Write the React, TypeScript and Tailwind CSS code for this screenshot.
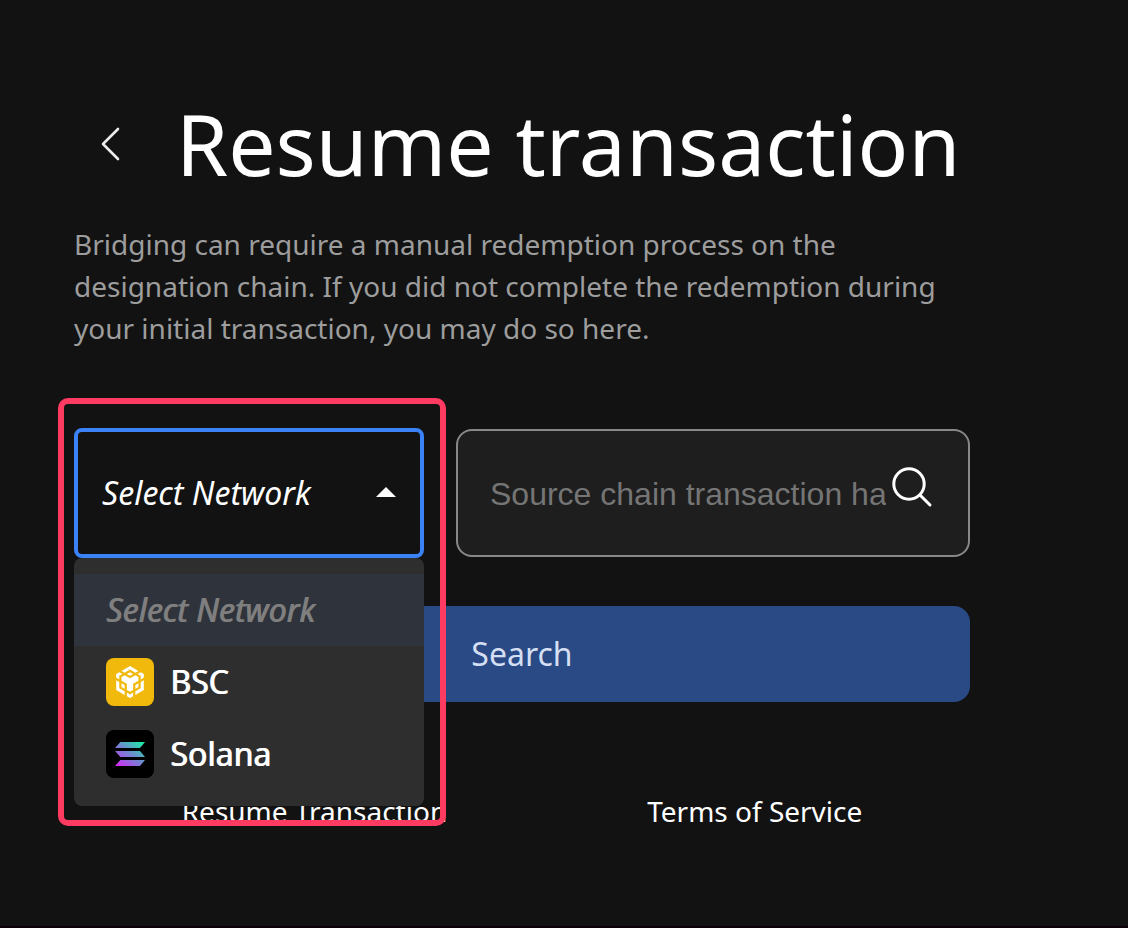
import { useState } from "react";
import type { ReactNode } from "react";

function BscIcon() {
  return (
    <span className="flex size-12 shrink-0 items-center justify-center rounded-lg bg-[#f0b90b]">
      <svg viewBox="0 0 24 24" className="size-8" fill="#fff" aria-hidden="true">
        <path d="M5.631 3.676 12.001 0l6.367 3.676-2.34 1.358L12 2.716 7.972 5.034l-2.34-1.358Zm12.737 4.636-2.34-1.358L12 9.272 7.972 6.954l-2.34 1.358v2.716l4.026 2.318v4.636L12 19.341l2.341-1.359v-4.636l4.027-2.318V8.312Zm0 7.352v-2.716l-2.34 1.358v2.716l2.34-1.358Zm1.663.96-4.027 2.318v2.717l6.368-3.677V10.63l-2.34 1.358v4.636Zm-2.34-10.63 2.34 1.358v2.716l2.341-1.358V5.994l-2.34-1.358-2.342 1.358ZM9.657 19.926v2.716L12 24l2.341-1.358v-2.716l-2.34 1.358-2.342-1.358Zm-4.027-4.262 2.34 1.358v-2.716l-2.34-1.358v2.716Zm4.027-9.67L12 7.352l2.341-1.358L12 4.636 9.659 5.994Zm-5.69 1.358 2.34-1.358-2.34-1.358-2.342 1.358V8.71l2.341 1.358V7.352Zm0 4.636-2.341-1.358v7.352l6.369 3.676v-2.716l-4.028-2.318v-4.636Z" />
      </svg>
    </span>
  );
}

function SolanaIcon() {
  return (
    <span className="flex size-12 shrink-0 rounded-lg bg-black">
      <svg viewBox="0 0 144 144" className="size-12" aria-hidden="true">
        <defs>
          <linearGradient id="solana" gradientUnits="userSpaceOnUse" x1="40" y1="112" x2="102" y2="32">
            <stop offset="0" stopColor="#d32df5" />
            <stop offset="0.5" stopColor="#7384d2" />
            <stop offset="1" stopColor="#1ceaa6" />
          </linearGradient>
        </defs>
        <path fill="url(#solana)" d="M43 36H117L102 54H27ZM27 63H102L117 81H43ZM43 90H117L102 108H27Z" />
      </svg>
    </span>
  );
}

const networks: { name: string; icon: ReactNode }[] = [
  { name: "BSC", icon: <BscIcon /> },
  { name: "Solana", icon: <SolanaIcon /> },
];

export default function App() {
  const [open, setOpen] = useState(true);
  const [network, setNetwork] = useState("");
  const choose = (name: string) => {
    setNetwork(name);
    setOpen(false);
  };

  return (
    <div className="min-h-screen border-b-2 border-[#0b0008] bg-[#121212] pt-24 pr-[158px] pl-[74px] font-['Noto_Sans',sans-serif] text-white">
      <header className="flex h-24 items-center">
        <button type="button" aria-label="Back" className="flex w-[102px] shrink-0 pl-6">
          <svg viewBox="0 0 24 36" className="h-9 w-6" fill="none" stroke="#ececec" strokeWidth="2.6" strokeLinecap="round" strokeLinejoin="round" aria-hidden="true">
            <path d="M20 3 5 18l15 15" />
          </svg>
        </button>
        <h1 className="text-[84px] leading-24 whitespace-nowrap">Resume transaction</h1>
      </header>

      <p className="mt-[31px] text-[28px] leading-[42px] text-[#9d9d9d]">
        Bridging can require a manual redemption process on the designation chain. If you did not complete the
        redemption during your initial transaction, you may do so here.
      </p>

      <form onSubmit={(e) => e.preventDefault()}>
        <div className="mt-[79px] flex gap-8">
          <div className="relative w-[350px] shrink-0">
            <select
              aria-label="Network"
              value={network}
              onChange={(e) => setNetwork(e.target.value)}
              onMouseDown={(e) => {
                e.preventDefault();
                setOpen(!open);
              }}
              className="block h-[130px] w-full appearance-none rounded-lg border-4 border-[#3b82f6] bg-transparent px-6 text-[32px] italic outline-none"
            >
              <option value="">Select Network</option>
              {networks.map((n) => (
                <option key={n.name}>{n.name}</option>
              ))}
            </select>
            <svg viewBox="0 0 20 10" className="pointer-events-none absolute top-[59px] right-7 h-2.5 w-5" fill="#fff" aria-hidden="true">
              <path d="M10 0 20 10H0Z" />
            </svg>
            {open && (
              <>
                <ul className="absolute top-full left-0 z-10 w-full rounded-lg bg-[#2e2e2e] py-4 text-[32px]">
                  <li>
                    <button type="button" onClick={() => choose("")} className="flex h-[72px] w-full items-center bg-[#2f333b] px-8 text-[#7f7f7f] italic [text-shadow:1px_0_currentColor]">
                      Select Network
                    </button>
                  </li>
                  {networks.map((n) => (
                    <li key={n.name}>
                      <button type="button" onClick={() => choose(n.name)} className="flex h-[72px] w-full items-center gap-4 px-8 [text-shadow:1px_0_currentColor]">
                        {n.icon}
                        {n.name}
                      </button>
                    </li>
                  ))}
                </ul>
                <div className="pointer-events-none absolute -top-[30px] -left-4 z-20 h-[428px] w-[388px] rounded-[10px] border-6 border-[#ff3b61]" />
              </>
            )}
          </div>

          <div className="my-px flex min-w-0 flex-1 items-center rounded-2xl border-2 border-[#888] bg-[#1e1e1e] pr-[34px] pl-8">
            <input
              type="text"
              aria-label="Source chain transaction hash"
              placeholder="Source chain transaction hash"
              className="min-w-0 flex-1 bg-transparent pt-0.5 font-['Liberation_Sans',sans-serif] text-[32px] outline-none placeholder:text-[#757575]"
            />
            <button type="button" aria-label="Find transaction" className="mb-3 shrink-0 pl-1.5">
              <svg viewBox="0 0 42 42" className="size-[42px]" fill="none" stroke="#fff" strokeWidth="3" strokeLinecap="round" aria-hidden="true">
                <circle cx="17" cy="18" r="15.2" />
                <path d="m28 29 10 10" />
              </svg>
            </button>
          </div>
        </div>

        <button type="submit" className="mt-12 h-24 w-full rounded-2xl bg-[#294a85] text-[32px] text-[#d4dff3]">
          Search
        </button>
      </form>

      <footer className="mt-[89px] flex justify-center gap-[200px] text-[28px] leading-10 whitespace-nowrap">
        <a href="#resume">Resume Transaction</a>
        <a href="#terms">Terms of Service</a>
      </footer>
    </div>
  );
}
